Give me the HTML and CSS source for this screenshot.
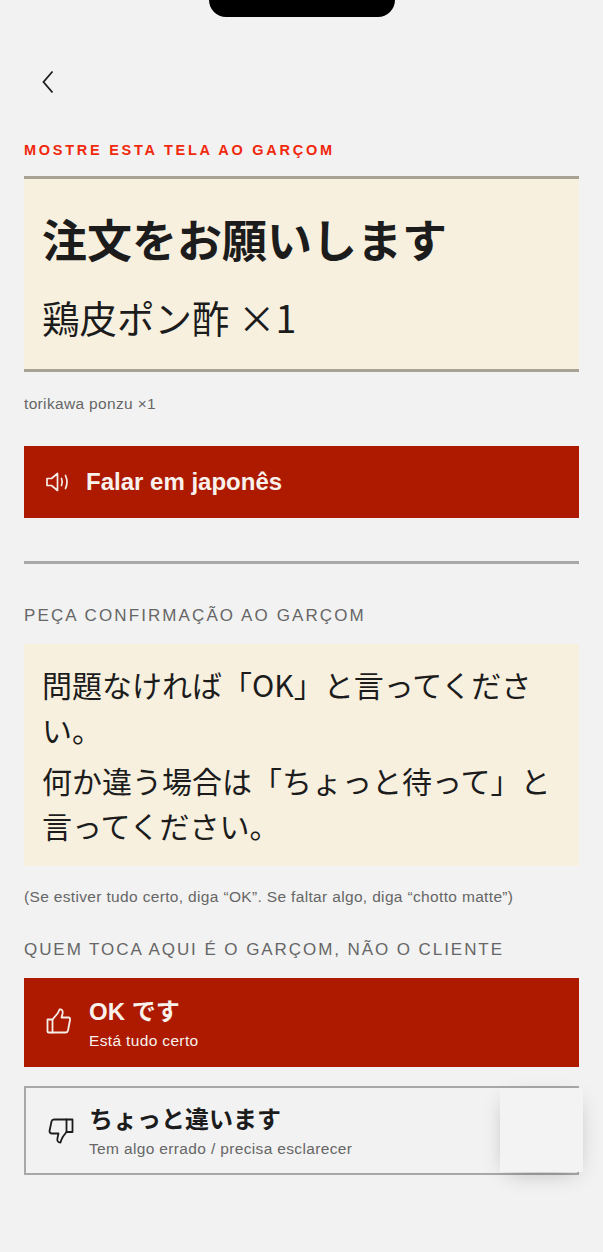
FILE: index.html
```html
<!DOCTYPE html>
<html lang="pt-BR">
<head>
  <meta charset="UTF-8">
  <meta name="viewport" content="width=device-width, initial-scale=1.0">
  <title>Mostre esta tela ao garçom</title>
  <link rel="stylesheet" href="styles.css">
</head>
<body>
<div class="notch"></div>
<main class="screen">
  <button class="back" aria-label="Voltar">
    <svg width="12" height="24" viewBox="0 0 12 24"><path d="M10.5 1.5 L1.5 12 L10.5 22.5" fill="none" stroke="#1c1c1c" stroke-width="1.8"/></svg>
  </button>

  <div class="eyebrow">MOSTRE ESTA TELA AO GARÇOM</div>

  <section class="order-card">
    <h1 lang="ja">注文をお願いします</h1>
    <p class="order-item" lang="ja">鶏皮ポン酢 ×1</p>
  </section>
  <p class="note note-order">torikawa ponzu ×1</p>

  <button class="btn btn-speak">
    <svg width="26" height="22" viewBox="0 0 26 22" fill="none" stroke="#f6eee8" stroke-width="1.7" stroke-linejoin="round" stroke-linecap="round">
      <path d="M2 7.5 H6.5 L12.5 2.5 V19.5 L6.5 14.5 H2 Z"/>
      <path d="M16.5 7.5 Q18 11 16.5 14.5"/>
      <path d="M20.5 4.5 Q23.5 11 20.5 17.5"/>
    </svg>
    <span>Falar em japonês</span>
  </button>

  <hr class="divider">

  <div class="section-label label-confirm">PEÇA CONFIRMAÇÃO AO GARÇOM</div>
  <section class="ask-card" lang="ja">
    <p>問題なければ「OK」と言ってください。</p>
    <p>何か違う場合は「ちょっと待って」と言ってください。</p>
  </section>
  <p class="note note-ask">(Se estiver tudo certo, diga “OK”. Se faltar algo, diga “chotto matte”)</p>

  <div class="section-label label-waiter">QUEM TOCA AQUI É O GARÇOM, NÃO O CLIENTE</div>

  <button class="btn btn-answer btn-ok">
    <svg width="28" height="28" viewBox="0 0 28 28" fill="none" stroke="#f6eee8" stroke-width="1.8" stroke-linejoin="round" stroke-linecap="round">
      <path d="M2.5 12.5 H7.5 V25.5 H3.5 Q2.5 25.5 2.5 24.5 Z"/>
      <path d="M7.5 12.5 L12.5 6.5 Q14 4 14.5 2.5 Q18.5 2 17.5 7 L16.5 10.5 H23.5 Q25.5 10.5 25 13 L23 23.5 Q22.5 25.5 20.5 25.5 H7.5"/>
    </svg>
    <span class="btn-text">
      <strong lang="ja">OK です</strong>
      <small>Está tudo certo</small>
    </span>
  </button>

  <button class="btn btn-answer btn-wrong">
    <svg width="28" height="28" viewBox="0 0 28 28" fill="none" stroke="#1c1c1c" stroke-width="1.8" stroke-linejoin="round" stroke-linecap="round">
      <path d="M19.5 2.5 H25.5 V15 H19.5 Z"/>
      <path d="M19.5 2.5 H7 Q5 2.5 4.5 4.5 L2.5 14 Q2.5 16.5 5 16.5 H11.5 L10.5 21 Q9.5 25.5 13.5 25.5 Q14.5 22 16 19.5 L19.5 15"/>
    </svg>
    <span class="btn-text">
      <strong lang="ja">ちょっと違います</strong>
      <small>Tem algo errado / precisa esclarecer</small>
    </span>
  </button>
</main>
<div class="floating-tab"></div>
</body>
</html>
```

FILE: styles.css
```css
* {
  box-sizing: border-box;
}
html, body {
  margin: 0;
  height: 100%;
}
body {
  position: relative;
  height: 1252px;
  overflow: hidden;
  background: #f2f2f2;
  color: #1c1c1c;
  font-family: "Liberation Sans", "Noto Sans CJK JP", sans-serif;
}
.notch {
  position: absolute;
  top: 0;
  left: 209px;
  width: 186px;
  height: 17px;
  background: #000;
  border-radius: 0 0 24px 24px;
}
.screen {
  display: flex;
  flex-direction: column;
  padding: 70px 24px 0;
}
.back {
  align-self: flex-start;
  display: flex;
  width: 24px;
  height: 24px;
  margin-left: 18px;
  padding: 0;
  background: none;
  border: none;
}
.eyebrow {
  margin-top: 47px;
  height: 19px;
  font-size: 14.5px;
  line-height: 18px;
  font-weight: 700;
  letter-spacing: 2.73px;
  color: #f0290c;
}
.order-card {
  margin-top: 16px;
  height: 196px;
  padding: 30px 18px 0;
  background: #f7f0df;
  border-top: 3px solid #a8a294;
  border-bottom: 3px solid #a8a294;
}
.order-card h1 {
  margin: 0;
  font-family: "Noto Sans CJK JP", sans-serif;
  font-size: 45px;
  line-height: 60px;
  font-weight: 700;
}
.order-item {
  margin: 20px 0 0;
  font-family: "Noto Sans CJK JP", sans-serif;
  font-size: 37.5px;
  line-height: 56px;
}
.note {
  margin: 0;
  font-size: 15.5px;
  line-height: 20px;
  letter-spacing: 0.34px;
  color: #666;
}
.note-order {
  margin-top: 22px;
}
.btn {
  display: flex;
  align-items: center;
  width: 100%;
  padding: 0 0 0 21px;
  border: none;
  font-family: inherit;
  text-align: left;
}
.btn-speak {
  height: 72px;
  margin-top: 32px;
  gap: 15px;
  background: #ad1a00;
  color: #f8f1ec;
  font-size: 24px;
  font-weight: 700;
}
.divider {
  width: 100%;
  height: 3px;
  margin: 43px 0 0;
  background: #a8a8a8;
  border: none;
}
.section-label {
  font-size: 17px;
  line-height: 22px;
  color: #666;
}
.label-confirm {
  margin-top: 41px;
  letter-spacing: 2.1px;
}
.ask-card {
  height: 222px;
  margin-top: 17px;
  padding: 18px 18px 0;
  background: #f7f0df;
  font-family: "Noto Sans CJK JP", sans-serif;
  font-size: 30px;
  line-height: 45px;
}
.ask-card p {
  margin: 0 0 6px;
}
.note-ask {
  margin-top: 21px;
}
.label-waiter {
  margin-top: 32px;
  letter-spacing: 1.93px;
}
.btn-answer {
  height: 89px;
}
.btn-ok {
  margin-top: 17px;
  gap: 16px;
  background: #ad1a00;
  color: #f8f1ec;
}
.btn-ok svg {
  margin-bottom: 3px;
}
.btn-wrong {
  margin-top: 19px;
  background: transparent;
  border: 2px solid #a8a8a8;
  gap: 14px;
  color: #1c1c1c;
}
.btn-text {
  display: flex;
  flex-direction: column;
  padding-top: 2px;
}
.btn-text strong {
  font-size: 24px;
  line-height: 32px;
  font-weight: 700;
}
.btn-text small {
  margin-top: 2px;
  font-size: 15.5px;
  line-height: 22px;
  letter-spacing: 0.35px;
}
.btn-wrong small {
  color: #666;
}
.floating-tab {
  position: absolute;
  top: 1088px;
  left: 500px;
  width: 83px;
  height: 84px;
  background: #f3f3f3;
  box-shadow: 0 6px 24px -8px rgba(0, 0, 0, 0.3);
}
```
